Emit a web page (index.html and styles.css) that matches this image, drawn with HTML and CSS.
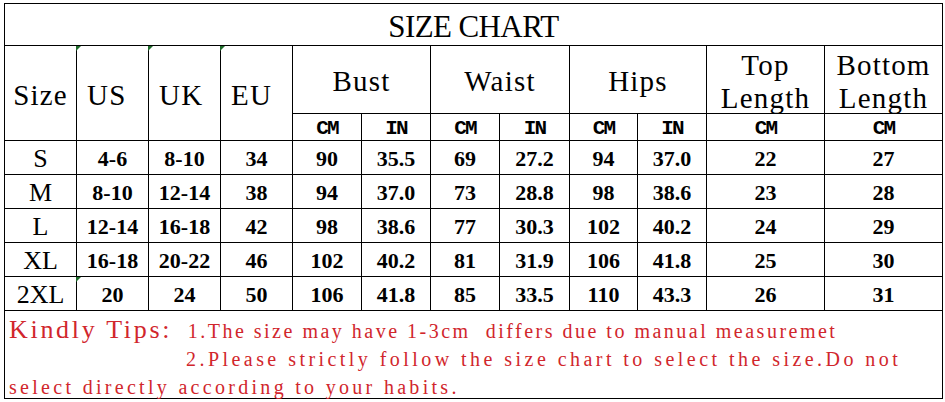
FILE: index.html
```html
<!DOCTYPE html>
<html lang="en">
<head>
<meta charset="utf-8">
<title>Size Chart</title>
<link rel="stylesheet" href="styles.css">
</head>
<body>
<div class="chart">
  <div class="title">SIZE CHART</div>

  <div class="hx rs2">Size</div>
  <div class="hx rs2 left flag">US</div>
  <div class="hx rs2 left flag">UK</div>
  <div class="hx rs2 left flag">EU</div>
  <div class="hx cs2">Bust</div>
  <div class="hx cs2">Waist</div>
  <div class="hx cs2">Hips</div>
  <div class="hx two">Top<br>Length</div>
  <div class="hx two">Bottom<br>Length</div>

  <div class="unit">CM</div><div class="unit">IN</div>
  <div class="unit">CM</div><div class="unit">IN</div>
  <div class="unit">CM</div><div class="unit">IN</div>
  <div class="unit">CM</div><div class="unit">CM</div>

  <div class="sz">S</div><div class="num">4-6</div><div class="num">8-10</div><div class="num">34</div>
  <div class="num">90</div><div class="num">35.5</div><div class="num">69</div><div class="num">27.2</div>
  <div class="num">94</div><div class="num">37.0</div><div class="num">22</div><div class="num">27</div>

  <div class="sz">M</div><div class="num">8-10</div><div class="num">12-14</div><div class="num">38</div>
  <div class="num">94</div><div class="num">37.0</div><div class="num">73</div><div class="num">28.8</div>
  <div class="num">98</div><div class="num">38.6</div><div class="num">23</div><div class="num">28</div>

  <div class="sz">L</div><div class="num">12-14</div><div class="num">16-18</div><div class="num">42</div>
  <div class="num">98</div><div class="num">38.6</div><div class="num">77</div><div class="num">30.3</div>
  <div class="num">102</div><div class="num">40.2</div><div class="num">24</div><div class="num">29</div>

  <div class="sz">XL</div><div class="num">16-18</div><div class="num">20-22</div><div class="num">46</div>
  <div class="num">102</div><div class="num">40.2</div><div class="num">81</div><div class="num">31.9</div>
  <div class="num">106</div><div class="num">41.8</div><div class="num">25</div><div class="num">30</div>

  <div class="sz">2XL</div><div class="num flag">20</div><div class="num">24</div><div class="num">50</div>
  <div class="num">106</div><div class="num">41.8</div><div class="num">85</div><div class="num">33.5</div>
  <div class="num">110</div><div class="num">43.3</div><div class="num">26</div><div class="num">31</div>

  <div class="tips">
    <div class="tip-line"><span class="kindly">Kindly Tips:</span> 1.The size may have 1-3cm&nbsp; differs due to manual measuremet</div>
    <div class="tip-line wider indent">2.Please strictly follow the size chart to select the size.Do not</div>
    <div class="tip-line wide">select directly according to your habits.</div>
  </div>
</div>
</body>
</html>
```

FILE: styles.css
```css
body {
  margin: 0;
  background: #fff;
  color: #000;
}

.chart {
  margin: 3px 0 0 4px;
  width: max-content;
  display: grid;
  grid-template-columns: 71px 71px 71px 71px 68px 68px 68px 69px 67px 68px 117px 117px;
  grid-template-rows: 41px 67px 26px 33px 33px 33px 33px 33px 87px;
  gap: 1px;
  padding: 1px;
  background: #000;
}

.chart > div {
  background: #fff;
  display: flex;
  align-items: center;
  justify-content: center;
  position: relative;
  text-align: center;
  white-space: nowrap;
}

.title {
  grid-column: 1 / -1;
  font-family: "Liberation Serif", serif;
  font-size: 31px;
  letter-spacing: -0.6px;
  padding-top: 4px;
}

.hx {
  font-family: "Liberation Serif", serif;
  font-size: 29px;
  letter-spacing: 1.2px;
  line-height: 33px;
  padding-top: 4px;
}

.rs2 { grid-row: span 2; }
.cs2 { grid-column: span 2; }

.chart > .left {
  justify-content: flex-start;
  padding-left: 10px;
}

.unit {
  font-family: "Liberation Mono", monospace;
  font-weight: bold;
  font-size: 21px;
  letter-spacing: -1.8px;
  padding-top: 3px;
}

.sz {
  font-family: "Liberation Serif", serif;
  font-size: 26px;
  padding-top: 3px;
}

.num {
  font-family: "Liberation Serif", serif;
  font-weight: bold;
  font-size: 22px;
  padding-top: 3px;
}

.flag::before {
  content: "";
  position: absolute;
  top: 0;
  left: -1px;
  border-top: 5px solid #1e6b2a;
  border-right: 5px solid transparent;
}

.chart > .tips {
  grid-column: 1 / -1;
  display: block;
  text-align: left;
  color: #d1262c;
  padding: 5px 0 0 4px;
  font-family: "Liberation Serif", serif;
  font-size: 20px;
  letter-spacing: 2.5px;
  line-height: 28px;
}

.kindly {
  font-size: 26px;
  letter-spacing: 2.7px;
  margin-right: 8px;
}

.wide {
  letter-spacing: 3.3px;
}

.wider {
  letter-spacing: 3.45px;
}

.indent {
  padding-left: 177px;
}
```
